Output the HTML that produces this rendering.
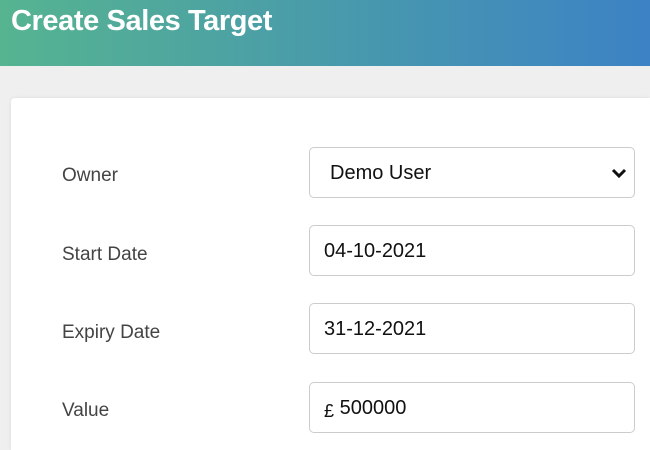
<!DOCTYPE html>
<html style="width:650px;height:450px;overflow:hidden"><head><style>
body{margin:0;width:650px;height:450px;overflow:hidden;background:#efefef;font-family:"Liberation Sans",sans-serif;position:relative}
.hdr{position:absolute;left:0;top:0;width:650px;height:66px;background:linear-gradient(90deg,#56b490,#3c82c5)}
.hdr h1{margin:0;position:absolute;left:11px;top:5px;color:#fff;font-size:29px;font-weight:bold;letter-spacing:-0.4px}
.card{position:absolute;left:11px;top:98px;width:639px;height:352px;background:#fff;border-radius:4px 0 0 0;box-shadow:0 0 4px rgba(0,0,0,.08)}
.lbl{position:absolute;left:62px;font-size:19px;color:#444}
.in{position:absolute;left:309px;width:326px;height:51px;border:1.5px solid #ccc;border-radius:5px;background:#fff;box-sizing:border-box;font-size:20px;color:#111;line-height:50px;padding-left:14px}
</style></head><body>
<div class="hdr"><h1>Create Sales Target</h1></div>
<div class="card"></div>
<div class="lbl" style="top:165px">Owner</div>
<div class="lbl" style="top:244px">Start Date</div>
<div class="lbl" style="top:322px">Expiry Date</div>
<div class="lbl" style="top:400px">Value</div>
<div class="in" style="top:147px;padding-left:20px">Demo User
<svg style="position:absolute;right:7px;top:19px" width="16" height="12" viewBox="0 0 16 12"><path d="M2 3l6 6 6-6" stroke="#111" stroke-width="3" fill="none"/></svg></div>
<div class="in" style="top:225px">04-10-2021</div>
<div class="in" style="top:303px">31-12-2021</div>
<div class="in" style="top:382px"><span style="font-size:18px;position:relative;top:3px">£</span> 500000</div>
</body></html>
